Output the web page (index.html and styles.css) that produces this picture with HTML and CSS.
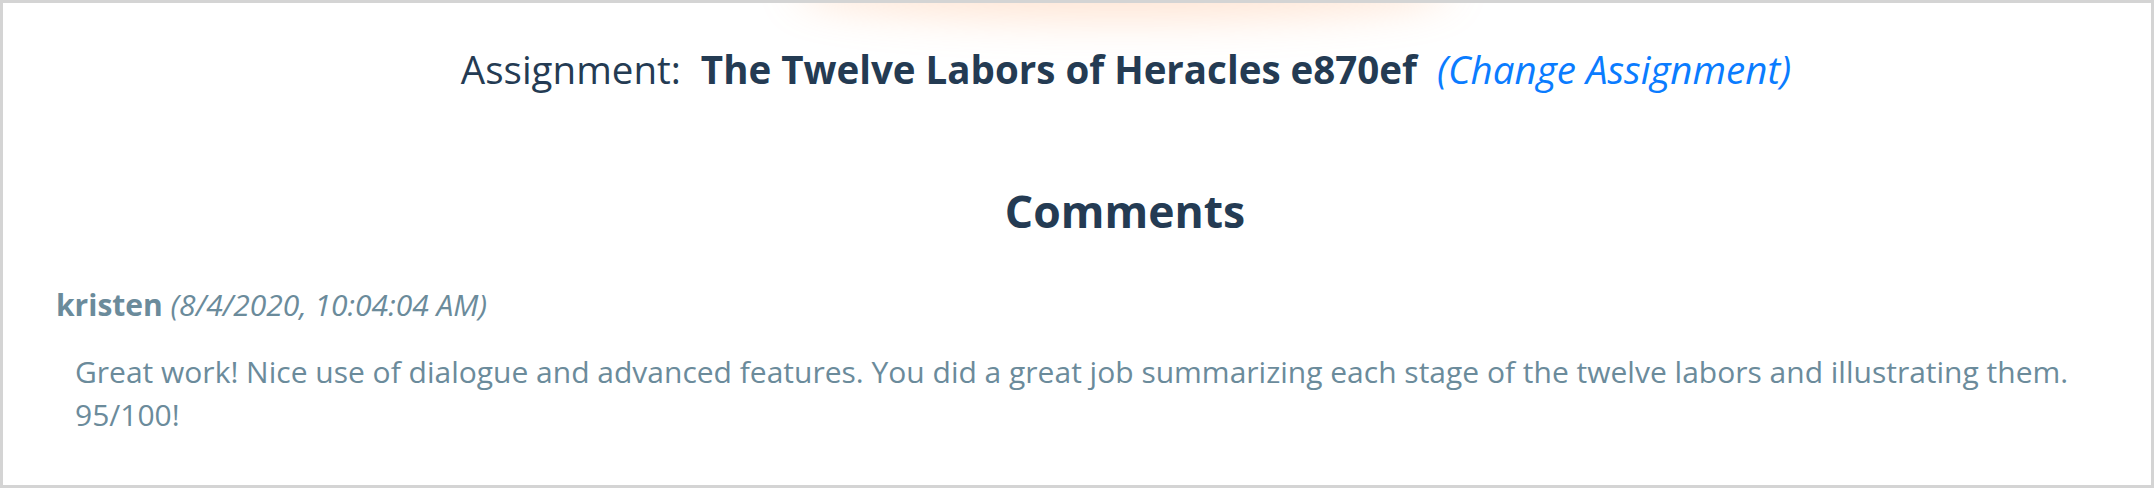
FILE: index.html
```html
<!DOCTYPE html>
<html lang="en">
<head>
    <meta charset="UTF-8">
    <meta name="viewport" content="width=device-width, initial-scale=1.0">
    <title>Assignment Comments</title>
    <link rel="stylesheet" href="styles.css">
</head>
<body>
    <div class="page">
        <div class="glow"></div>
        <div class="assignment">
            <span class="label">Assignment:</span>
            <span class="title">The Twelve Labors of Heracles e870ef</span>
            <a class="change-link" href="#">(Change Assignment)</a>
        </div>

        <h2 class="section-title">Comments</h2>

        <div class="comment">
            <div class="comment-meta">
                <span class="author">kristen</span>
                <span class="date">(8/4/2020, 10:04:04 AM)</span>
            </div>
            <p class="comment-body">Great work! Nice use of dialogue and advanced features. You did a great job summarizing each stage of the twelve labors and illustrating them. 95/100!</p>
        </div>
    </div>
</body>
</html>
```

FILE: styles.css
```css
body {
    margin: 0;
    padding: 0;
    font-family: "Open Sans", Arial, sans-serif;
    background-color: #fff;
}

.page {
    position: relative;
    height: 488px;
    box-sizing: border-box; /* border counts in the 488px */
    border: 3px solid #d4d4d4;
    background-color: #fff;
    padding: 40px 53px 0;
    overflow: hidden;
}

.glow {
    position: absolute;
    top: -40px;
    left: 800px;
    width: 640px;
    height: 40px;
    border-radius: 50%;
    box-shadow: 0 6px 40px 10px rgba(255, 160, 100, 0.28);
}

.assignment {
    text-align: center;
    padding-left: 98px;
    font-size: 38.5px;
    line-height: 52px;
    color: #243b53;
}

.assignment .title {
    font-weight: 700;
    margin: 0 10px;
}

.change-link {
    color: #0a7cff;
    font-style: italic;
    text-decoration: none;
}

.section-title {
    margin: 87px 0 0;
    padding-left: 96px;
    text-align: center;
    font-size: 44.5px;
    line-height: 57px;
    font-weight: 700;
    color: #243b53;
}

.comment {
    margin-top: 47px;
    color: #6b8b9b;
}

.comment-meta {
    font-size: 30px;
    line-height: 38px;
}

.author {
    font-weight: 700;
}

.date {
    font-style: italic;
}

.comment-body {
    margin: 26px 0 0;
    padding-left: 19px;
    font-size: 30px;
    line-height: 43px;
}
```
